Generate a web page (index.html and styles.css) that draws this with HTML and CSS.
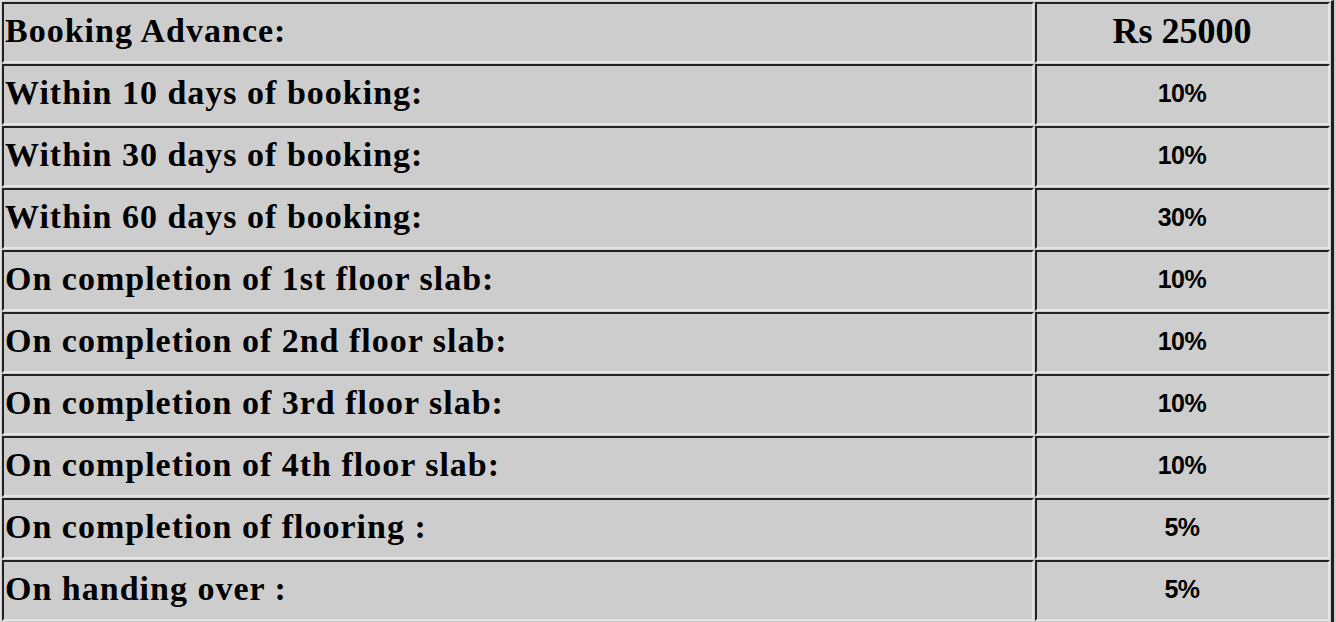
FILE: index.html
```html
<!DOCTYPE html>
<html>
<head>
<meta charset="utf-8">
<link rel="stylesheet" href="styles.css">
</head>
<body>
<table class="plan">
  <tr><td class="label">Booking Advance:</td><td class="amount">Rs 25000</td></tr>
  <tr><td class="label">Within 10 days of booking:</td><td class="pct">10%</td></tr>
  <tr><td class="label">Within 30 days of booking:</td><td class="pct">10%</td></tr>
  <tr><td class="label">Within 60 days of booking:</td><td class="pct">30%</td></tr>
  <tr><td class="label">On completion of 1st floor slab:</td><td class="pct">10%</td></tr>
  <tr><td class="label">On completion of 2nd floor slab:</td><td class="pct">10%</td></tr>
  <tr><td class="label">On completion of 3rd floor slab:</td><td class="pct">10%</td></tr>
  <tr><td class="label">On completion of 4th floor slab:</td><td class="pct">10%</td></tr>
  <tr><td class="label">On completion of flooring :</td><td class="pct">5%</td></tr>
  <tr><td class="label">On handing over :</td><td class="pct">5%</td></tr>
</table>
</body>
</html>
```

FILE: styles.css
```css
html, body {
  margin: 0;
  padding: 0;
  background: #cdcdcd;
}

.plan {
  width: 1334px;
  border-collapse: separate;
  border-spacing: 1px;
  border-style: solid;
  border-width: 1px 3px 3px 1px;
  border-color: #e2e2e2 #1e1e1e #1e1e1e #e2e2e2;
  background: #cdcdcd;
  color: #000;
}

.plan td {
  height: 61px;
  box-sizing: border-box;
  padding: 0 2px 3px 1px;
  border-style: solid;
  border-width: 2px;
  border-color: #222 #e4e4e4 #e4e4e4 #222;
  vertical-align: middle;
  white-space: nowrap;
}

.label {
  width: 1032px;
  text-align: left;
  font-family: "Liberation Serif", "Times New Roman", serif;
  font-weight: bold;
  font-size: 34px;
  letter-spacing: 1px;
}

.amount {
  text-align: center;
  font-family: "Liberation Serif", "Times New Roman", serif;
  font-weight: bold;
  font-size: 36px;
  letter-spacing: 0;
}

.pct {
  text-align: center;
  font-family: "Liberation Sans", Arial, sans-serif;
  font-weight: bold;
  font-size: 25px;
  letter-spacing: -0.5px;
}
```
